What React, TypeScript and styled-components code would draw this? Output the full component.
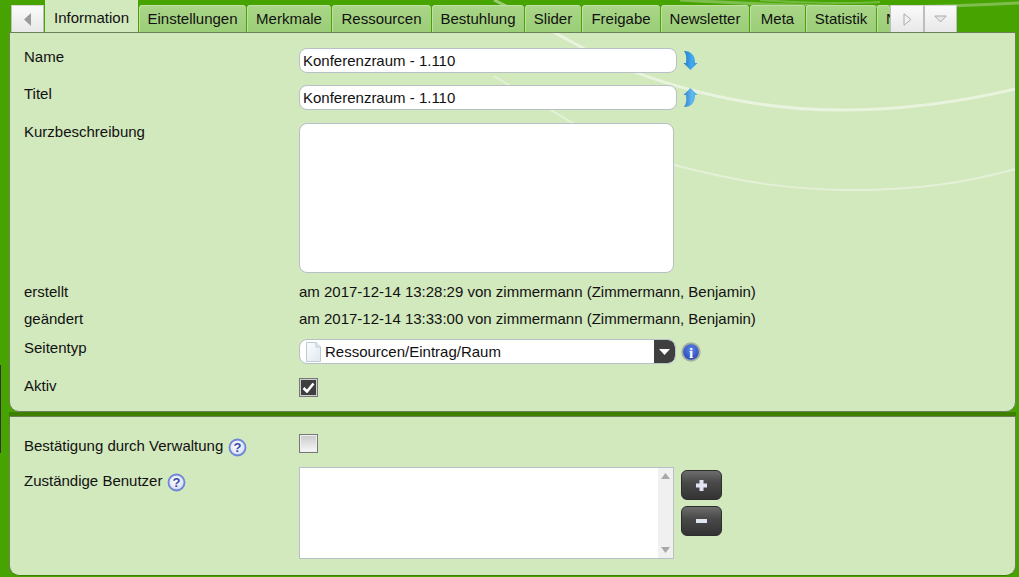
import React from "react";
import styled, { createGlobalStyle } from "styled-components";

const Global = createGlobalStyle`
  html, body { margin: 0; padding: 0; height: 100%; overflow: hidden; }
  body { background: #46a300; font-family: "Liberation Sans", Arial, sans-serif; font-size: 15px; color: #111; }
`;
const Page = styled.div`
  position: relative; width: 1019px; height: 577px; overflow: hidden; background: #46a300;
`;
const Backdrop = styled.svg`
  position: absolute; left: 0; top: 0; pointer-events: none;
`;
const PanelSwoosh = styled.svg`
  position: absolute; left: 0; top: 0; pointer-events: none; border-radius: 0 0 10px 10px;
`;
const LeftMark = styled.div`
  position: absolute; left: 0; top: 365px; width: 1px; height: 88px; background: #333;
`;
const TabBar = styled.div`
  display: flex; align-items: flex-end; height: 32px; margin-left: 11px; width: 946px; position: relative; z-index: 1;
`;
const Scroller = styled.div<{ $w: number }>`
  flex: none; width: ${(p) => p.$w}px; height: 27px; box-sizing: border-box;
  display: flex; align-items: center; justify-content: center;
  background: linear-gradient(#fafafa, #e8e8e8); border: 1px solid #bdbdbd; border-bottom: none; border-top-color: #d8d8d8;
`;
const Tab = styled.div<{ $w: number; $active?: boolean; $clip?: boolean }>`
  flex: none; width: ${(p) => p.$w}px; height: ${(p) => (p.$active ? 32 : 27)}px; box-sizing: border-box;
  margin-left: 1px; line-height: ${(p) => (p.$active ? 36 : 27)}px; padding-left: ${(p) => (p.$clip ? 9 : 0)}px;
  text-align: ${(p) => (p.$clip ? "left" : "center")}; overflow: hidden; color: #111;
  background: ${(p) => (p.$active ? "#d2e8bd" : "linear-gradient(#a9d688, #9ccd78)")};
  border-radius: ${(p) => (p.$active ? "0" : "4px 4px 0 0")};
  box-shadow: ${(p) => (p.$active ? "none" : "inset 0 1px 0 #bfe2a4, inset 1px 0 0 #bfe2a4")};
`;
const Panel = styled.section`
  position: relative; z-index: 2; box-sizing: border-box; margin-left: 9px; width: 1007px;
  background: #d2e8bd; border: 1px solid #6b7f5a; border-radius: 0 0 10px 10px;
  padding: 0 14px;
`;
const InfoPanel = styled(Panel)`
  height: 380px;
`;
const Divider = styled.div`
  height: 4px; background: #3f7f00; margin-left: 9px; width: 1007px;
`;
const AssignPanel = styled(Panel)`
  height: 160px; border-bottom-color: #3f7f00;
`;
const Row = styled.div<{ $h: number; $mt?: number }>`
  position: relative; z-index: 1;
  display: grid; grid-template-columns: 275px 1fr; height: ${(p) => p.$h}px; margin-top: ${(p) => p.$mt ?? 0}px;
`;
const Label = styled.div<{ $pt: number }>`
  padding-top: ${(p) => p.$pt}px; line-height: 15px; display: flex; align-items: flex-start; gap: 5px;
`;
const Control = styled.div<{ $pt?: number }>`
  display: flex; align-items: flex-start; gap: 5px; padding-top: ${(p) => p.$pt ?? 0}px;
`;
const TextInput = styled.div`
  box-sizing: border-box; width: 378px; height: 25px; background: #fff; border: 1px solid #b9bfc6; border-radius: 8px;
  padding-left: 3px; line-height: 23px; color: #111;
`;
const TextArea = styled.div`
  box-sizing: border-box; width: 375px; height: 150px; background: #fff; border: 1px solid #b9bfc6; border-radius: 8px;
`;
const Value = styled.div`
  line-height: 15px;
`;
const Select = styled.div`
  box-sizing: border-box; width: 377px; height: 25px; background: #fff; border: 1px solid #b9bfc6; border-radius: 8px;
  display: flex; align-items: center; overflow: hidden; padding-left: 5px; gap: 3px;
`;
const SelectText = styled.span`
  flex: 1; line-height: 23px;
`;
const SelectArrow = styled.div`
  flex: none; width: 21px; height: 23px; background: #3f3f3f; display: flex; align-items: center; justify-content: center;
  border-radius: 0 7px 7px 0;
`;
const Check = styled.div<{ $on?: boolean }>`
  box-sizing: border-box; width: 19px; height: 19px; border: 1px solid #777;
  background: ${(p) => (p.$on ? "#3f3f3f" : "linear-gradient(#c9c9c9, #f8f8f8)")};
  box-shadow: inset 0 0 0 1px ${(p) => (p.$on ? "#cfcfcf" : "#eee")};
  display: flex; align-items: center; justify-content: center;
`;
const ListBox = styled.div`
  box-sizing: border-box; width: 375px; height: 92px; background: #fff; border: 1px solid #b9bfc6; display: flex; justify-content: flex-end;
`;
const ScrollTrack = styled.div`
  width: 15px; background: #f0f0f0; display: flex; flex-direction: column; justify-content: space-between; align-items: center; padding: 5px 0; box-sizing: border-box;
`;
const Buttons = styled.div`
  display: flex; flex-direction: column; gap: 6px; margin: 3px 0 0 2px;
`;
const RoundButton = styled.div`
  box-sizing: border-box; width: 41px; height: 30px; border-radius: 6px; border: 1px solid #2d2d2d;
  background: linear-gradient(#6d6d6d, #4a4a4a 40%, #333);
  display: flex; align-items: center; justify-content: center;
`;
const ArrowIcon = styled.svg`
  flex: none; margin: 2px 0 0 1px;
`;
const InfoIcon = styled.svg`
  flex: none; margin-top: 3px;
`;
const HelpIcon = styled.svg`
  flex: none;
`;

const Arrow = ({ up }: { up?: boolean }) => (
  <ArrowIcon width="15" height="21" viewBox="0 0 15 21">
    <defs>
      <linearGradient id={up ? "au" : "ad"} x1="0" y1="0" x2="1" y2="0">
        <stop offset="0" stopColor={up ? "#2a7fc6" : "#1f78c4"} />
        <stop offset=".6" stopColor={up ? "#62b8f0" : "#45aaf0"} />
        <stop offset="1" stopColor={up ? "#4aa8e6" : "#2f96e2"} />
      </linearGradient>
    </defs>
    <path
      transform={up ? "translate(0 21) scale(1 -1)" : undefined}
      d="M1 1 C7 1 12 4 12 13 H14.5 L7.5 20 L0.5 13 H3 C3.5 8 3.5 4 1 1 Z"
      fill={`url(#${up ? "au" : "ad"})`}
    />
  </ArrowIcon>
);
const Help = () => (
  <HelpIcon width="19" height="19" viewBox="0 0 19 19">
    <defs>
      <radialGradient id="hg" cx=".45" cy=".4" r=".65">
        <stop offset="0" stopColor="#fff" />
        <stop offset=".7" stopColor="#dfe5f8" />
        <stop offset="1" stopColor="#aebcec" />
      </radialGradient>
    </defs>
    <circle cx="9.5" cy="9.5" r="8" fill="url(#hg)" stroke="#6f84d8" strokeWidth="1.8" />
    <text x="9.5" y="14" textAnchor="middle" fontSize="13" fontWeight="700" fontFamily="Liberation Sans" fill="#3a4aa6">?</text>
  </HelpIcon>
);
const Info = () => (
  <InfoIcon width="20" height="20" viewBox="0 0 20 20">
    <defs>
      <radialGradient id="ig" cx=".5" cy=".35" r=".7">
        <stop offset="0" stopColor="#5c86ea" />
        <stop offset="1" stopColor="#2345b4" />
      </radialGradient>
    </defs>
    <circle cx="10" cy="10" r="9.7" fill="#a4aea0" />
    <circle cx="10" cy="10" r="7.8" fill="url(#ig)" />
    <text x="10" y="15.5" textAnchor="middle" fontSize="15" fontWeight="700" fontFamily="Liberation Serif" fill="#fff">i</text>
  </InfoIcon>
);
const PageIcon = () => (
  <svg width="17" height="20" viewBox="0 0 17 20" style={{ flex: "none" }}>
    <defs>
      <linearGradient id="pg" x1="0" y1="0" x2="1" y2="1">
        <stop offset="0" stopColor="#fbfdfe" />
        <stop offset="1" stopColor="#dfe9ef" />
      </linearGradient>
    </defs>
    <path d="M1.5.5H11L15.5 5V19.5H1.5Z" fill="url(#pg)" stroke="#bccad2" />
    <path d="M11 .5V5H15.5" fill="#dfe8ee" stroke="#bccad2" />
  </svg>
);

const tabs: [string, number][] = [
  ["Einstellungen", 107], ["Merkmale", 84], ["Ressourcen", 99], ["Bestuhlung", 92], ["Slider", 56],
  ["Freigabe", 78], ["Newsletter", 88], ["Meta", 55], ["Statistik", 70],
];

export default function App() {
  return (
    <Page>
      <Global />
      <Backdrop width="1019" height="32" viewBox="0 0 1019 32">
        <path d="M494 0 L510 8" fill="none" stroke="#fff" strokeOpacity=".45" strokeWidth="3" />
        <path d="M680 0 C790 6 900 10 1019 3" fill="none" stroke="#fff" strokeOpacity=".3" strokeWidth="3" />
        <path d="M760 0 C800 3 850 4 880 2" fill="none" stroke="#fff" strokeOpacity=".25" strokeWidth="2" />
      </Backdrop>
      <LeftMark />
      <TabBar>
        <Scroller $w={33}>
          <svg width="9" height="13" viewBox="0 0 9 13"><path d="M8 0V13L1 6.5Z" fill="#9a9a9a" /></svg>
        </Scroller>
        <Tab $w={93} $active>Information</Tab>
        {tabs.map(([t, w]) => (
          <Tab key={t} $w={w}>{t}</Tab>
        ))}
        <Tab $w={13} $clip>N</Tab>
        <Scroller $w={34}>
          <svg width="9" height="13" viewBox="0 0 9 13"><path d="M1 .8V12.2L8 6.5Z" fill="#f2f2f2" stroke="#aaa" /></svg>
        </Scroller>
        <Scroller $w={33}>
          <svg width="13" height="8" viewBox="0 0 13 8"><path d="M.8 1H12.2L6.5 7Z" fill="#e8e8e8" stroke="#aaa" /></svg>
        </Scroller>
      </TabBar>
      <InfoPanel>
        <PanelSwoosh width="1005" height="378" viewBox="10 33 1005 378">
          <path d="M494 0 L583 48 C640 80 740 110 840 110 C910 110 970 100 1019 88" fill="none" stroke="#fff" strokeOpacity=".5" strokeWidth="3" />
          <path d="M494 76 L576 125 C620 145 640 155 674 165 C740 182 790 190 851 190 C920 190 970 182 1019 168" fill="none" stroke="#fff" strokeOpacity=".4" strokeWidth="2" />
        </PanelSwoosh>
        <Row $h={37} $mt={15}>
          <Label $pt={1}>Name</Label>
          <Control>
            <TextInput>Konferenzraum - 1.110</TextInput>
            <Arrow />
          </Control>
        </Row>
        <Row $h={38}>
          <Label $pt={1}>Titel</Label>
          <Control>
            <TextInput>Konferenzraum - 1.110</TextInput>
            <Arrow up />
          </Control>
        </Row>
        <Row $h={161}>
          <Label $pt={1}>Kurzbeschreibung</Label>
          <Control><TextArea /></Control>
        </Row>
        <Row $h={27}>
          <Label $pt={0}>erstellt</Label>
          <Value>am 2017-12-14 13:28:29 von zimmermann (Zimmermann, Benjamin)</Value>
        </Row>
        <Row $h={28}>
          <Label $pt={0}>geändert</Label>
          <Value>am 2017-12-14 13:33:00 von zimmermann (Zimmermann, Benjamin)</Value>
        </Row>
        <Row $h={38}>
          <Label $pt={1}>Seitentyp</Label>
          <Control>
            <Select>
              <PageIcon />
              <SelectText>Ressourcen/Eintrag/Raum</SelectText>
              <SelectArrow>
                <svg width="11" height="6" viewBox="0 0 11 6"><path d="M0 0H11L5.5 6Z" fill="#fff" /></svg>
              </SelectArrow>
            </Select>
            <Info />
          </Control>
        </Row>
        <Row $h={30}>
          <Label $pt={1}>Aktiv</Label>
          <Control $pt={1}>
            <Check $on>
              <svg width="13" height="11" viewBox="0 0 13 11"><path d="M1.5 6L5 9.5L11.5 1.5" fill="none" stroke="#fff" strokeWidth="2.6" /></svg>
            </Check>
          </Control>
        </Row>
      </InfoPanel>
      <Divider />
      <AssignPanel>
        <Row $h={33} $mt={17}>
          <Label $pt={4}>Bestätigung durch Verwaltung <Help /></Label>
          <Control><Check /></Control>
        </Row>
        <Row $h={92}>
          <Label $pt={6}>Zuständige Benutzer <Help /></Label>
          <Control>
            <ListBox>
              <ScrollTrack>
                <svg width="9" height="6" viewBox="0 0 9 6"><path d="M0 6H9L4.5 0Z" fill="#a8a8a8" /></svg>
                <svg width="9" height="6" viewBox="0 0 9 6"><path d="M0 0H9L4.5 6Z" fill="#a8a8a8" /></svg>
              </ScrollTrack>
            </ListBox>
            <Buttons>
              <RoundButton>
                <svg width="13" height="13" viewBox="0 0 13 13"><path d="M4.5 1H8.5V4.5H12V8.5H8.5V12H4.5V8.5H1V4.5H4.5Z" fill="#dfe6f2" /></svg>
              </RoundButton>
              <RoundButton>
                <svg width="13" height="6" viewBox="0 0 13 6"><rect x="1" y="1" width="11" height="4" fill="#dfe6f2" /></svg>
              </RoundButton>
            </Buttons>
          </Control>
        </Row>
      </AssignPanel>
    </Page>
  );
}
